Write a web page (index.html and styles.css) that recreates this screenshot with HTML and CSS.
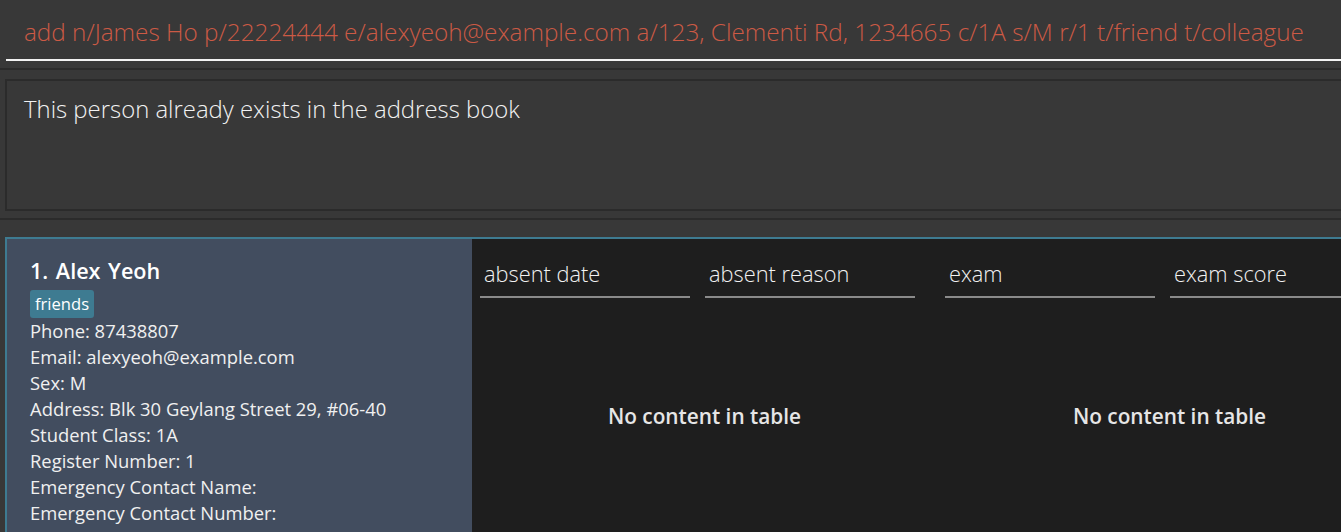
FILE: index.html
```html
<!DOCTYPE html>
<html>
<head>
<meta charset="utf-8">
<link rel="stylesheet" href="styles.css">
</head>
<body>
<div class="app">
  <div class="command-pane">
    <div class="command-field">add n/James Ho p/22224444 e/alexyeoh@example.com a/123, Clementi Rd, 1234665 c/1A s/M r/1 t/friend t/colleague</div>
  </div>
  <div class="result-pane">
    <div class="result-box">This person already exists in the address book</div>
  </div>
  <div class="list-pane">
    <div class="card">
      <div class="name">1. Alex Yeoh</div>
      <div class="tags"><span class="tag">friends</span></div>
      <div class="field">Phone: 87438807</div>
      <div class="field">Email: alexyeoh@example.com</div>
      <div class="field">Sex: M</div>
      <div class="field">Address: Blk 30 Geylang Street 29, #06-40</div>
      <div class="field">Student Class: 1A</div>
      <div class="field">Register Number: 1</div>
      <div class="field">Emergency Contact Name:</div>
      <div class="field">Emergency Contact Number:</div>
    </div>
    <div class="tables">
      <div class="table">
        <div class="thead">
          <div class="th">absent date</div>
          <div class="th">absent reason</div>
        </div>
        <div class="empty">No content in table</div>
      </div>
      <div class="table">
        <div class="thead">
          <div class="th">exam</div>
          <div class="th">exam score</div>
        </div>
        <div class="empty">No content in table</div>
      </div>
    </div>
  </div>
</div>
</body>
</html>
```
FILE: styles.css
```css
* { box-sizing: border-box; }
html, body { margin: 0; padding: 0; }
body {
  background: #383838;
  width: 1341px;
  height: 532px;
  overflow: hidden;
  font-family: "Open Sans", "Liberation Sans", sans-serif;
}
.app { width: 1341px; overflow: hidden; }
.command-pane {
  height: 70px;
  width: 1360px;
  padding-left: 6px;
  border-bottom: 2px solid #2b2b2b;
}
.command-field {
  height: 61px;
  border-bottom: 2px solid #f2f2f2;
  padding-left: 18px;
  padding-top: 15px;
  color: #cc5a45;
  font-weight: 300;
  font-size: 24.3px;
  line-height: 33px;
  white-space: nowrap;
  overflow: hidden;
}
.result-pane {
  height: 150px;
  width: 1360px;
  padding: 9px 0 0 5px;
  border-bottom: 2px solid #2b2b2b;
}
.result-box {
  height: 132px;
  border: 2px solid #2b2b2b;
  border-right: none;
  padding: 11px 0 0 17px;
  color: #f2f2f2;
  font-weight: 300;
  font-size: 23.9px;
}
.list-pane {
  margin-top: 17px;
  margin-left: 5px;
  width: 1360px;
  height: 300px;
  display: flex;
  border-top: 2px solid #3e7b91;
  border-left: 2px solid #3e7b91;
}
.card {
  width: 465px;
  flex: none;
  background: #424d5f;
  padding: 19px 0 0 23px;
  color: #f0f0f0;
  font-size: 18.4px;
}
.name {
  font-weight: 600;
  font-size: 21.6px;
  color: #ffffff;
  line-height: 26px;
  word-spacing: 2px;
}
.tags { margin: 6px 0 0 0; display: flex; }
.tag {
  background: #3e7b91;
  color: #ffffff;
  border-radius: 3px;
  padding: 0 5px;
  font-size: 16.6px;
  line-height: 27px;
  height: 28px;
}
.field { line-height: 26px; }
.tables {
  flex: 1;
  display: flex;
  background: #1e1e1e;
  overflow: hidden;
}
.table {
  width: 465px;
  flex: none;
  padding-left: 8px;
  display: flex;
  flex-direction: column;
}
.thead {
  display: flex;
  gap: 15px;
  padding-top: 20px;
}
.th {
  width: 210px;
  border-bottom: 2px solid #8a8a8a;
  color: #f2f2f2;
  font-weight: 300;
  font-size: 21.8px;
  padding: 0 0 8px 4px;
  line-height: 29px;
}
.empty {
  padding-top: 104px;
  text-align: center;
  padding-right: 8px;
  color: #e6e6e6;
  font-weight: 600;
  font-size: 20.8px;
}
```
